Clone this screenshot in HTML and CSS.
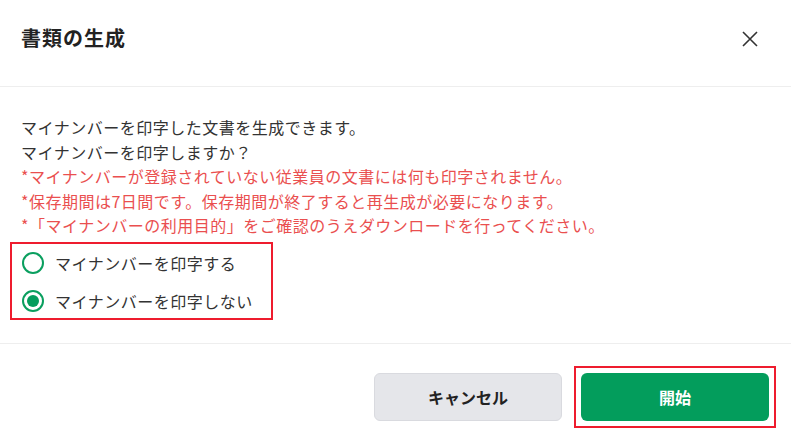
FILE: index.html
```html
<!DOCTYPE html>
<html lang="ja">
<head>
    <meta charset="UTF-8">
    <meta name="viewport" content="width=device-width, initial-scale=1.0">
    <title>書類の生成</title>
    <link rel="stylesheet" href="styles.css">
</head>
<body>
    <div class="dialog">
        <header class="dialog-header">
            <h1>書類の生成</h1>
            <button type="button" class="close-btn" aria-label="閉じる">
                <svg width="18" height="18" viewBox="0 0 18 18">
                    <path d="M2 2 L16 16 M16 2 L2 16" stroke="#333" stroke-width="1.6" fill="none"/>
                </svg>
            </button>
        </header>

        <main class="dialog-body">
            <p>マイナンバーを印字した文書を生成できます。</p>
            <p>マイナンバーを印字しますか？</p>
            <p class="note">*マイナンバーが登録されていない従業員の文書には何も印字されません。</p>
            <p class="note">*保存期間は7日間です。保存期間が終了すると再生成が必要になります。</p>
            <p class="note">*「マイナンバーの利用目的」をご確認のうえダウンロードを行ってください。</p>

            <div class="radio-group">
                <label class="radio-row"><input type="radio" name="print" value="yes"/>マイナンバーを印字する</label>
                <label class="radio-row"><input type="radio" name="print" value="no" checked/>マイナンバーを印字しない</label>
            </div>
        </main>

        <footer class="dialog-footer">
            <button type="button" class="btn btn-cancel">キャンセル</button>
            <div class="highlight">
                <button type="button" class="btn btn-start">開始</button>
            </div>
        </footer>
    </div>
</body>
</html>
```

FILE: styles.css
```css
*{
    margin:0;
    padding:0;
    box-sizing:border-box;
    font-family:"Noto Sans CJK JP", "Noto Sans", sans-serif;
}

body{
    background-color:#fff;
    color:#333;
}

.dialog{
    width:791px;
    height:439px;
    display:flex;
    flex-direction:column;
}

.dialog-header{
    height:87px;
    display:flex;
    justify-content:space-between;
    align-items:flex-start;
    padding:23px 32px 0 21px;
    border-bottom:1px solid #eeeeee;
}
.dialog-header h1{
    font-size:20px;
    line-height:30px;
    font-weight:bold;
    letter-spacing:1px;
    color:#222;
}
.close-btn{
    background:none;
    border:none;
    width:18px;
    height:18px;
    margin-top:7px;
    cursor:pointer;
}

.dialog-body{
    padding:28px 21px 0 21px;
    height:257px;
    border-bottom:1px solid #eeeeee;
}
.dialog-body p{
    font-size:16px;
    line-height:24.5px;
    letter-spacing:0.5px;
}
.dialog-body .note{
    color:#ea4f4f;
}

.radio-group{
    width:263px;
    margin:4px 0 0 -11px;
    border:2px solid #ee1c2e;
    padding:3px 10px 0;
    display:flex;
    flex-direction:column;
    gap:5px;
}
.radio-row{
    height:33px;
    display:flex;
    align-items:center;
    gap:11px;
    font-size:16px;
    letter-spacing:0.5px;
    cursor:pointer;
}
.radio-row input{
    appearance:none;
    width:22px;
    height:22px;
    border:2px solid #0a9f5f;
    border-radius:50%;
    display:grid;
    place-content:center;
    cursor:pointer;
}
.radio-row input:checked::before{
    content:"";
    width:12px;
    height:12px;
    border-radius:50%;
    background-color:#049c5c;
}

.dialog-footer{
    flex:1;
    display:flex;
    justify-content:flex-end;
    align-items:flex-start;
    gap:12px;
    padding:22px 15px 0 0;
}
.highlight{
    border:2px solid #ee1c2e;
    padding:5px;
}
.btn{
    width:188px;
    height:48px;
    border-radius:6px;
    font-size:16px;
    font-weight:bold;
    cursor:pointer;
}
.btn-cancel{
    margin-top:7px;
    background-color:#e5e6ea;
    border:1px solid #d9dadf;
    color:#222;
}
.btn-start{
    display:block;
    background-color:#039d5c;
    border:none;
    color:#fff;
}
```
